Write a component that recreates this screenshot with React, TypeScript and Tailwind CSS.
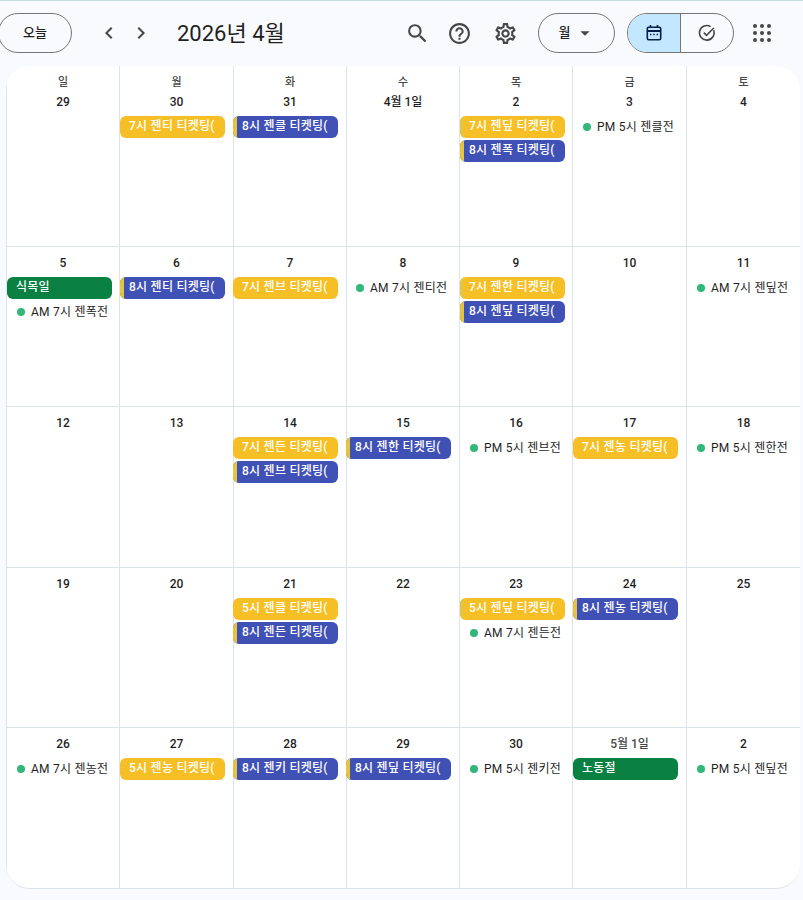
import { MdSearch, MdHelpOutline, MdOutlineSettings, MdChevronLeft, MdChevronRight, MdArrowDropDown } from 'react-icons/md';

type Item =
  | { kind: 'yellow'; text: string; strip?: boolean }
  | { kind: 'blue'; text: string }
  | { kind: 'holiday'; text: string }
  | { kind: 'dot'; text: string };

interface Day {
  label: string;
  items?: Item[];
}

const y = (text: string, strip?: boolean): Item => ({ kind: 'yellow', text, strip });
const b = (text: string): Item => ({ kind: 'blue', text });
const d = (text: string): Item => ({ kind: 'dot', text });
const h = (text: string): Item => ({ kind: 'holiday', text });

const weekdays = ['일', '월', '화', '수', '목', '금', '토'];

const weeks: Day[][] = [
  [
    { label: '29' },
    { label: '30', items: [y('7시 젠티 티켓팅(')] },
    { label: '31', items: [b('8시 젠클 티켓팅(')] },
    { label: '4월 1일' },
    { label: '2', items: [y('7시 젠딮 티켓팅(', true), b('8시 젠폭 티켓팅(')] },
    { label: '3', items: [d('PM 5시 젠클전')] },
    { label: '4' },
  ],
  [
    { label: '5', items: [h('식목일'), d('AM 7시 젠폭전')] },
    { label: '6', items: [b('8시 젠티 티켓팅(')] },
    { label: '7', items: [y('7시 젠브 티켓팅(')] },
    { label: '8', items: [d('AM 7시 젠티전')] },
    { label: '9', items: [y('7시 젠한 티켓팅(', true), b('8시 젠딮 티켓팅(')] },
    { label: '10' },
    { label: '11', items: [d('AM 7시 젠딮전')] },
  ],
  [
    { label: '12' },
    { label: '13' },
    { label: '14', items: [y('7시 젠든 티켓팅('), b('8시 젠브 티켓팅(')] },
    { label: '15', items: [b('8시 젠한 티켓팅(')] },
    { label: '16', items: [d('PM 5시 젠브전')] },
    { label: '17', items: [y('7시 젠농 티켓팅(')] },
    { label: '18', items: [d('PM 5시 젠한전')] },
  ],
  [
    { label: '19' },
    { label: '20' },
    { label: '21', items: [y('5시 젠클 티켓팅('), b('8시 젠든 티켓팅(')] },
    { label: '22' },
    { label: '23', items: [y('5시 젠딮 티켓팅(', true), d('AM 7시 젠든전')] },
    { label: '24', items: [b('8시 젠농 티켓팅(')] },
    { label: '25' },
  ],
  [
    { label: '26', items: [d('AM 7시 젠농전')] },
    { label: '27', items: [y('5시 젠농 티켓팅(')] },
    { label: '28', items: [b('8시 젠키 티켓팅(')] },
    { label: '29', items: [b('8시 젠딮 티켓팅(')] },
    { label: '30', items: [d('PM 5시 젠키전')] },
    { label: '5월 1일', items: [h('노동절')] },
    { label: '2', items: [d('PM 5시 젠딮전')] },
  ],
];

function Chip({ item }: { item: Item }) {
  if (item.kind === 'dot') {
    return (
      <div className="flex h-[22px] mb-[2px] items-center pl-[10px] whitespace-nowrap text-[12px] tracking-[0.25px] text-[#1f1f1f]">
        <span className="w-2 h-2 rounded-full bg-[#33b679] mr-[6px] shrink-0" />
        {item.text}
      </div>
    );
  }

  const bg = item.kind === 'yellow' ? 'bg-[#f6bf26]' : item.kind === 'blue' ? 'bg-[#3f51b5]' : 'bg-[#0b8043]';
  const hasStrip = item.kind === 'blue' || (item.kind === 'yellow' && item.strip);

  return (
    <div className={`flex h-[22px] w-[105px] mb-[2px] rounded-[6px] overflow-hidden whitespace-nowrap text-white text-[12px] font-medium tracking-[0.25px] leading-[21px] ${bg}`}>
      {hasStrip && <div className="w-1 shrink-0 bg-[#e4c441]" />}
      <span className={hasStrip ? 'pl-[5px]' : 'pl-[9px]'}>{item.text}</span>
    </div>
  );
}

function CalendarIcon() {
  return (
    <svg width="18" height="18" viewBox="0 0 18 18" fill="none" stroke="#041e49" strokeWidth="1.6">
      <rect x="2.3" y="3.3" width="13.4" height="12.4" rx="1.4" />
      <path d="M2.3 7h13.4" strokeWidth="1.8" />
      <path d="M5.5 1v3M12.5 1v3" />
      <path d="M5 10.5h1.4M8.3 10.5h1.4M11.6 10.5h1.4" strokeWidth="1.3" />
    </svg>
  );
}

function TaskIcon() {
  return (
    <svg width="18" height="18" viewBox="0 0 18 18" fill="none" stroke="#444746" strokeWidth="1.6">
      <path d="M15.6 6.2A7.3 7.3 0 1 1 12.6 2.6" />
      <path d="M5.8 8.6l2.7 2.7L15.8 4" />
    </svg>
  );
}

function AppsIcon() {
  const spots = [0, 1, 2];
  return (
    <svg width="18" height="18" viewBox="0 0 18 18" fill="#444746">
      {spots.map((r) => spots.map((c) => <circle key={`${r}-${c}`} cx={2 + c * 7} cy={2 + r * 7} r="2" />))}
    </svg>
  );
}

export default function App() {
  return (
    <div className="w-[803px] h-[900px] overflow-hidden bg-[#f8fafd] text-[#1f1f1f] font-['Roboto','Noto_Sans_CJK_KR',sans-serif]">
      {/* Toolbar */}
      <div className="flex items-center h-[66px] border-t border-[#c4dcdc] pb-[1px]">
        <button className="w-[74px] h-[40px] ml-[-2px] rounded-full border border-[#747775] text-[13px] font-medium text-[#1f1f1f]">오늘</button>
        <MdChevronLeft className="ml-[25px] text-[#444746]" size={24} />
        <MdChevronRight className="ml-[8px] text-[#444746]" size={24} />
        <span className="ml-[24px] w-[230px] text-[22px] text-[#1f1f1f] whitespace-nowrap">2026년 4월</span>
        <MdSearch className="ml-[-2px] text-[#444746]" size={25} />
        <MdHelpOutline className="ml-[17px] text-[#444746]" size={25} />
        <MdOutlineSettings className="ml-[21px] text-[#444746]" size={25} />
        <button className="flex items-center justify-center w-[77px] h-[40px] ml-[20px] rounded-full border border-[#747775] text-[13px] font-medium">
          <span className="ml-[2px]">월</span>
          <MdArrowDropDown className="ml-[4px] text-[#444746]" size={22} />
        </button>
        <div className="flex w-[107px] h-[40px] ml-[12px] rounded-full border border-[#747775] overflow-hidden">
          <div className="flex items-center justify-center w-[53px] bg-[#c2e7ff] border-r border-[#747775]">
            <CalendarIcon />
          </div>
          <div className="flex items-center justify-center flex-1">
            <TaskIcon />
          </div>
        </div>
        <div className="ml-[19px] flex">
          <AppsIcon />
        </div>
      </div>

      {/* Month grid */}
      <div className="w-[794px] ml-[6px] rounded-[24px] overflow-hidden bg-white border-b border-[#dde3ea] grid grid-cols-[113px_114px_113px_113px_113px_114px_114px] grid-rows-[180px_160px_161px_160px_161px]">
        {weeks.map((week, w) =>
          week.map((day, i) => (
            <div key={`${w}-${i}`} className={`border-l border-[#dde3ea] ${w > 0 ? 'border-t pt-[6px]' : ''}`}>
              {w === 0 && <div className="h-[16px] mt-[9px] mb-[1px] text-center text-[11px] leading-[16px] font-medium text-[#444746]">{weekdays[i]}</div>}
              <div className={`h-[20px] mb-[4px] text-center text-[12px] leading-[20px] font-medium ${day.label.includes('월') && w === 4 ? 'text-[#444746]' : 'text-[#1f1f1f]'}`}>
                {day.label}
              </div>
              <div className={i === 2 || i === 3 ? 'ml-[-1px]' : ''}>
                {day.items?.map((item, n) => <Chip key={n} item={item} />)}
              </div>
            </div>
          )),
        )}
      </div>
    </div>
  );
}
